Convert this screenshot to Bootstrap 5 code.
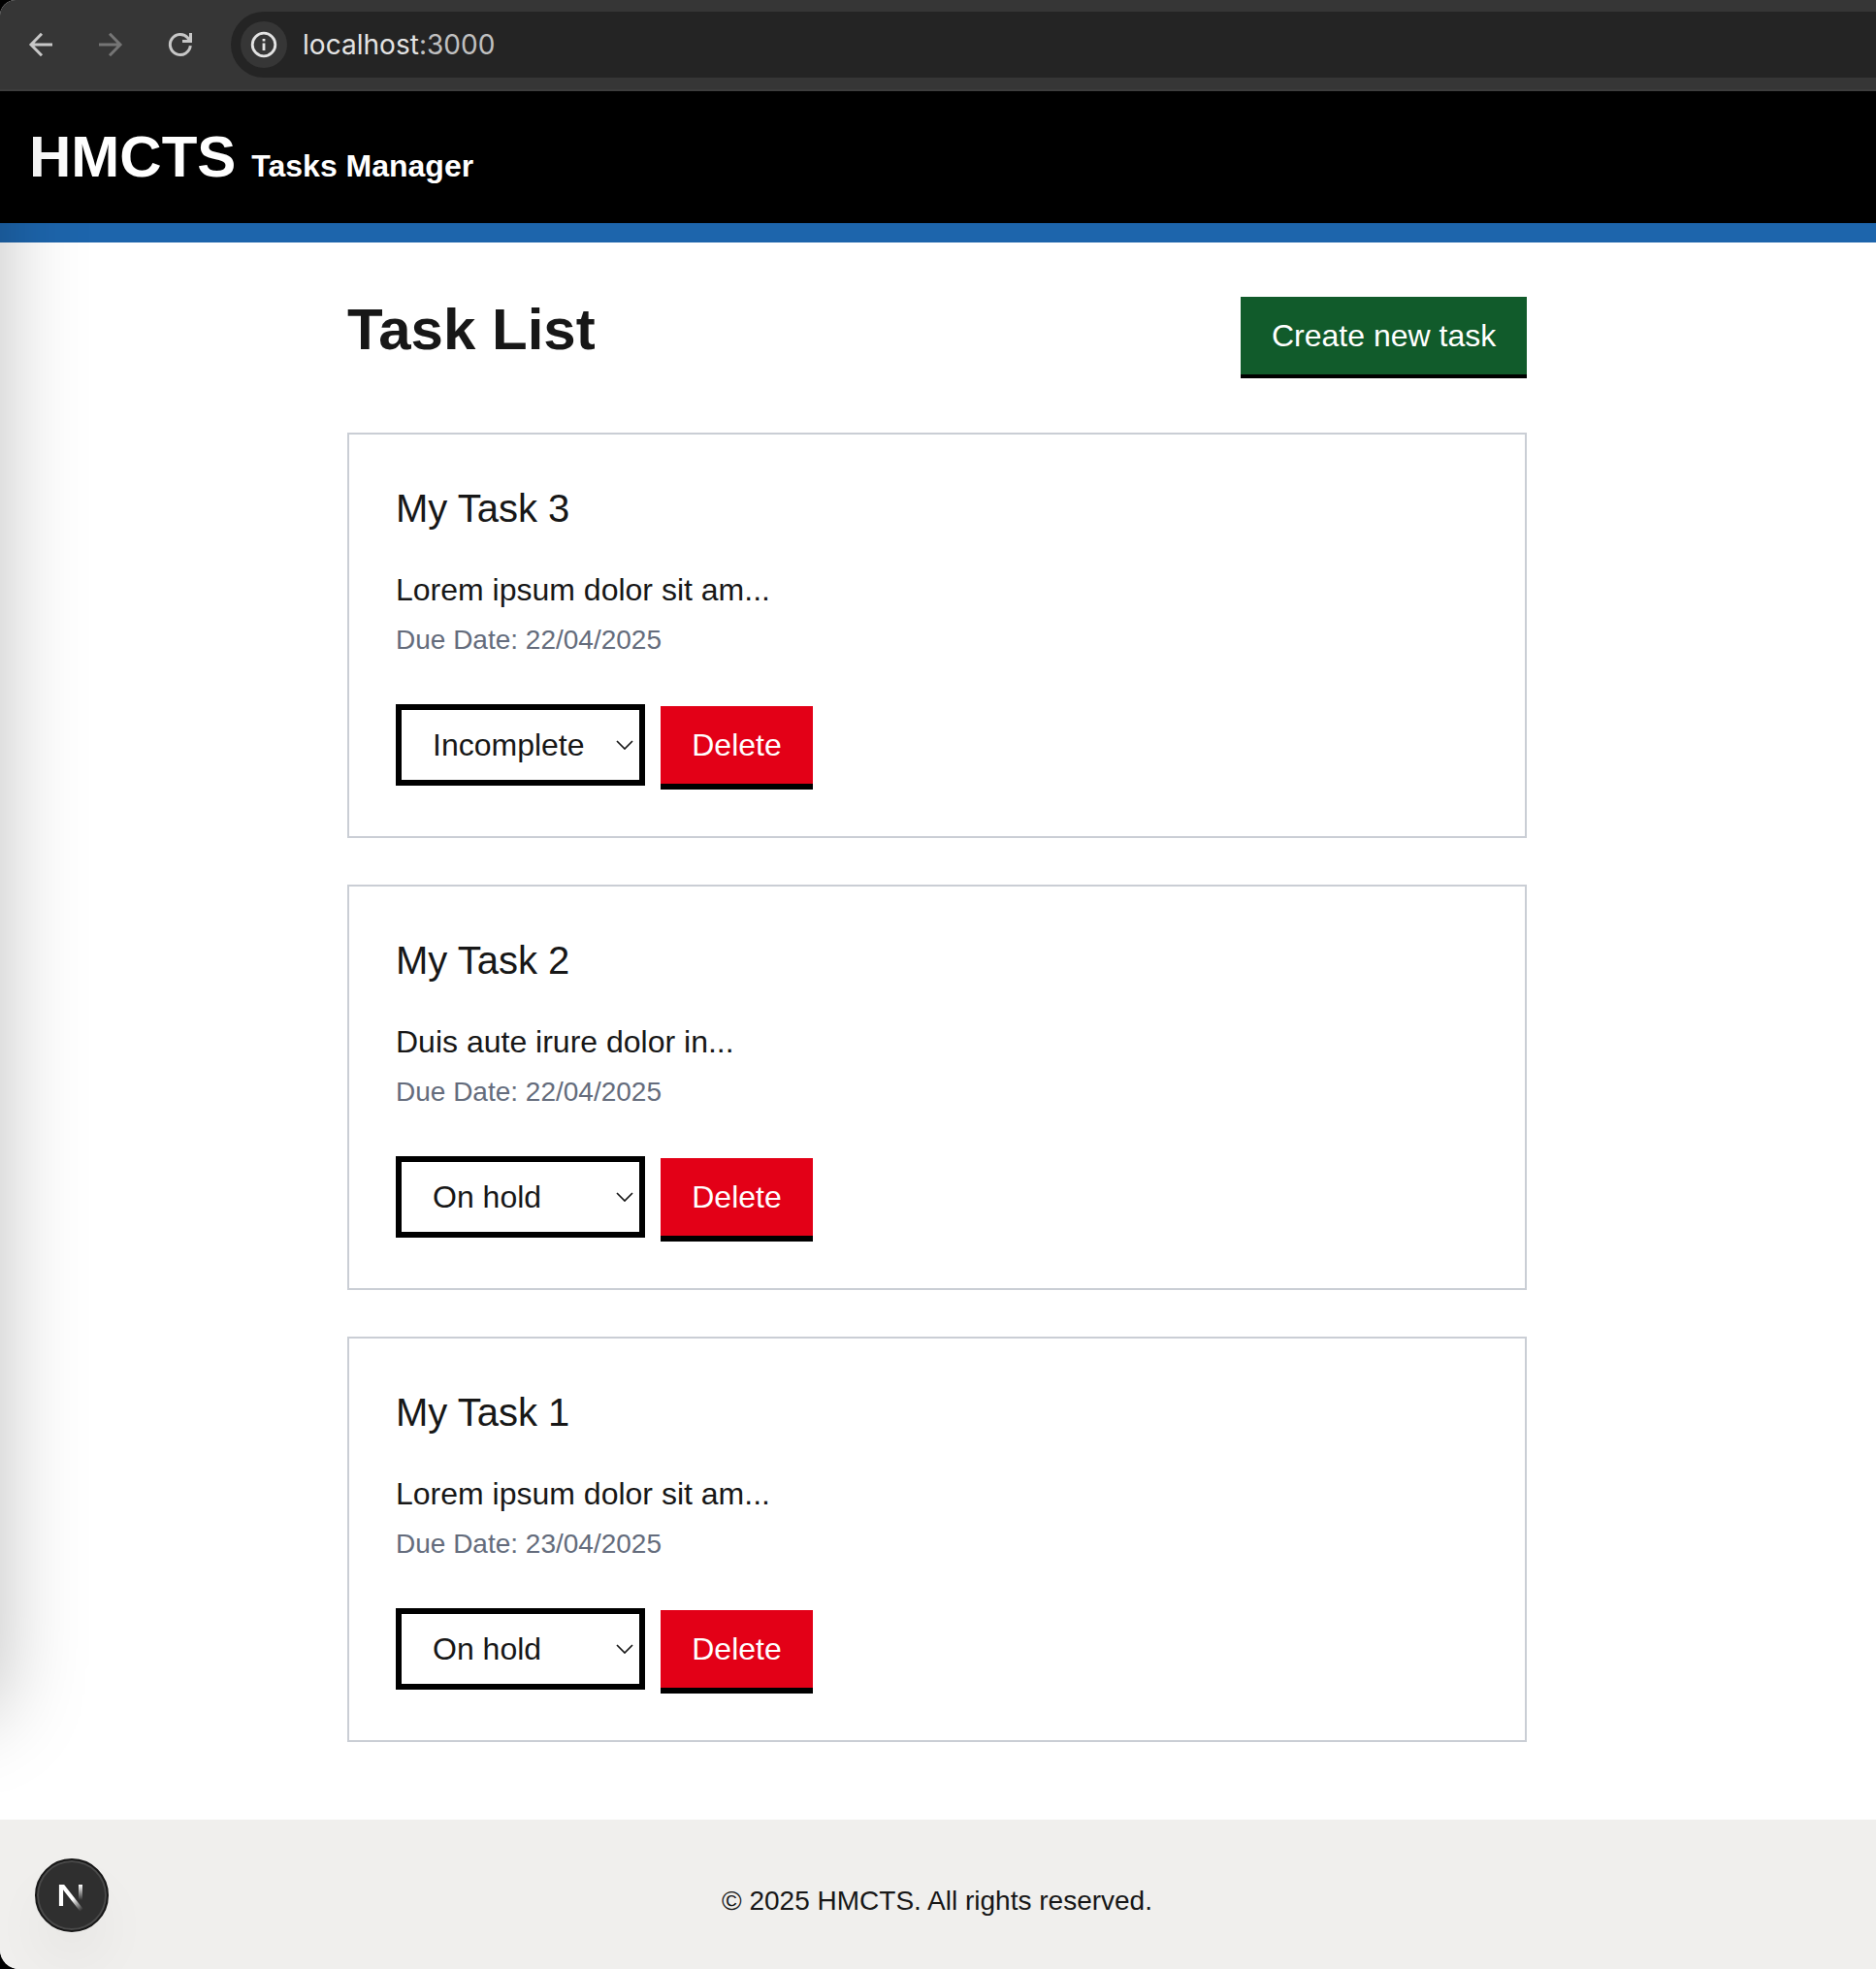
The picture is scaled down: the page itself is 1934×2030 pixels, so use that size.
<!DOCTYPE html>
<html lang="en">
<head>
<meta charset="utf-8">
<meta name="viewport" content="width=device-width, initial-scale=1">
<title>HMCTS Tasks Manager</title>
<link href="https://cdn.jsdelivr.net/npm/bootstrap@5.3.0/dist/css/bootstrap.min.css" rel="stylesheet">
<style>
body{font-family:"Liberation Sans",Arial,sans-serif;color:#171717;background:#000;font-size:32px;line-height:48px}
.window-frame{height:2030px;overflow:hidden;background:#fff;border-radius:16px 0 0 20px}
.toolbar{height:94px;background:#363636;border-bottom:2px solid #3d3d3d;padding:12px 0 12px 24px}
.tool-icon{width:36px;height:36px;margin-right:36px;color:#c7c7c7}
.tool-icon.dim{color:#757575}
.address{height:68px;background:#242424;border-radius:34px 0 0 34px;padding-left:10px;margin-left:-2px}
.site-info{width:48px;height:48px;background:#363636;color:#e3e3e3}
.url{font-family:Inter,sans-serif;font-size:28px;line-height:40px;margin-left:16px;color:#e3e3e3;letter-spacing:.03px}
.url span{color:#c0c0c0}
.site-header{height:156px;background:#000;border-bottom:20px solid #1d65ac;padding:32px 30px 0}
.brand{font-size:60px;line-height:72px}
.brand-sub{font-size:32px;margin-left:16px}
.page-body{width:1216px;margin-left:358px}
.page-head{padding:56px 0}
.page-title{font-size:60px;line-height:68px;margin:0}
.gov-btn{font-size:32px;line-height:48px;border:0;border-radius:0;color:#fff;height:80px;box-sizing:content-box;padding:0 32px;border-bottom:4px solid #000}
.gov-btn.create{background:#115b2b;width:231px}
.gov-btn.remove{background:#e30017;width:93px;border-bottom-width:6px;margin-top:2px}
.task-card{height:418px;border:2px solid #caced5;border-radius:0;padding:48px}
.task-title{font-size:40px;line-height:56px;font-weight:400;margin:0 0 32px}
.due{font-size:28px;line-height:40px;color:#646c7c;margin-top:8px}
.status{width:257px;height:84px;border:6px solid #000;border-radius:0;font-size:32px;line-height:48px;color:#171717;padding:12px 40px 12px 32px;
background:#fff url("data:image/svg+xml,%3Csvg xmlns='http://www.w3.org/2000/svg' viewBox='0 0 18 10' fill='none' stroke='%23171717' stroke-width='1.7'%3E%3Cpath d='M1 1l8 8 8-8'/%3E%3C/svg%3E") no-repeat right 6px top 31px/18px 10px}
.site-footer{height:154px;background:#f0efed;font-size:28px;line-height:40px;padding:64px 2px 0 0}
.edge-clip{left:0;top:94px;width:130px;height:1782px;overflow:hidden;pointer-events:none}
.edge-shadow{left:-400px;top:-200px;width:400px;height:1872px;border-radius:20px;box-shadow:0 0 88px rgba(0,0,0,.25)}
.dev-badge{left:36px;top:1916px;width:76px;height:76px;border-radius:50%;background:#2f2f2f;border:2px solid #171717;box-shadow:inset 0 0 0 2px #494949,0 32px 64px -16px rgba(0,0,0,.12)}
</style>
</head>
<body>
<div class="window-frame position-relative d-flex flex-column">
  <div class="toolbar d-flex align-items-center flex-shrink-0">
    <svg class="tool-icon" viewBox="0 0 36 36" fill="none" stroke="currentColor" stroke-width="3"><path d="M30 18H8.500M19 6.800L8 18l11 11.200"/></svg>
    <svg class="tool-icon dim" viewBox="0 0 36 36" fill="none" stroke="currentColor" stroke-width="3"><path d="M6 18h21.500M17 6.800L28 18 17 29.200"/></svg>
    <svg class="tool-icon" viewBox="0 0 36 36" fill="none" stroke="currentColor" stroke-width="3"><path d="M28.300 19.200A10.500 10.500 0 1 1 25.600 10.900L28 13.500"/><path d="M28.500 6v8.500H20"/><path d="M24.500 12.500l4-2v4z" fill="currentColor" stroke="none"/></svg>
    <div class="address d-flex align-items-center flex-grow-1">
      <div class="site-info rounded-circle d-flex align-items-center justify-content-center">
        <svg width="28" height="28" viewBox="0 0 28 28" fill="none" stroke="currentColor" stroke-width="2.800"><circle cx="14" cy="14" r="11.800"/><path d="M14 12.500v7.500M14 8v2.600"/></svg>
      </div>
      <div class="url">localhost<span>:3000</span></div>
    </div>
  </div>
  <header class="site-header d-flex align-items-baseline flex-shrink-0 text-white fw-bold">
    <span class="brand">HMCTS</span><span class="brand-sub">Tasks Manager</span>
  </header>
  <main class="page-body flex-grow-1 d-flex flex-column">
    <div class="page-head d-flex justify-content-between align-items-start">
      <h1 class="page-title fw-bold">Task List</h1>
      <button class="btn gov-btn create text-nowrap">Create new task</button>
    </div>
    <div class="d-flex flex-column gap-5">
      <article class="card task-card">
        <h2 class="task-title">My Task 3</h2>
        <div>Lorem ipsum dolor sit am...</div>
        <div class="due">Due Date: 22/04/2025</div>
        <div class="d-flex align-items-start gap-3 mt-auto">
          <select class="form-select status" aria-label="Status"><option>Incomplete</option></select>
          <button class="btn gov-btn remove">Delete</button>
        </div>
      </article>
      <article class="card task-card">
        <h2 class="task-title">My Task 2</h2>
        <div>Duis aute irure dolor in...</div>
        <div class="due">Due Date: 22/04/2025</div>
        <div class="d-flex align-items-start gap-3 mt-auto">
          <select class="form-select status" aria-label="Status"><option>On hold</option></select>
          <button class="btn gov-btn remove">Delete</button>
        </div>
      </article>
      <article class="card task-card">
        <h2 class="task-title">My Task 1</h2>
        <div>Lorem ipsum dolor sit am...</div>
        <div class="due">Due Date: 23/04/2025</div>
        <div class="d-flex align-items-start gap-3 mt-auto">
          <select class="form-select status" aria-label="Status"><option>On hold</option></select>
          <button class="btn gov-btn remove">Delete</button>
        </div>
      </article>
    </div>
  </main>
  <footer class="site-footer flex-shrink-0 text-center">© 2025 HMCTS. All rights reserved.</footer>
  <div class="edge-clip position-absolute"><div class="edge-shadow position-absolute"></div></div>
  <div class="dev-badge position-absolute d-flex">
    <svg width="72" height="72" viewBox="0 0 72 72" fill="none">
      <defs>
        <linearGradient id="diag" gradientUnits="userSpaceOnUse" x1="38" y1="39" x2="47" y2="51"><stop stop-color="#fff"/><stop offset="1" stop-color="#fff" stop-opacity="0"/></linearGradient>
        <linearGradient id="stem" gradientUnits="userSpaceOnUse" x1="0" y1="25" x2="0" y2="41"><stop stop-color="#fff"/><stop offset="1" stop-color="#fff" stop-opacity="0"/></linearGradient>
      </defs>
      <path d="M25 47V25" stroke="#fff" stroke-width="4.200"/>
      <path d="M22.900 25h5.200L48 50.500l-3.200 2.500L24 26.500z" fill="url(#diag)"/>
      <path d="M45 25v17" stroke="url(#stem)" stroke-width="4"/>
    </svg>
  </div>
</div>
<script src="https://cdn.jsdelivr.net/npm/bootstrap@5.3.0/dist/js/bootstrap.bundle.min.js"></script>
</body>
</html>
